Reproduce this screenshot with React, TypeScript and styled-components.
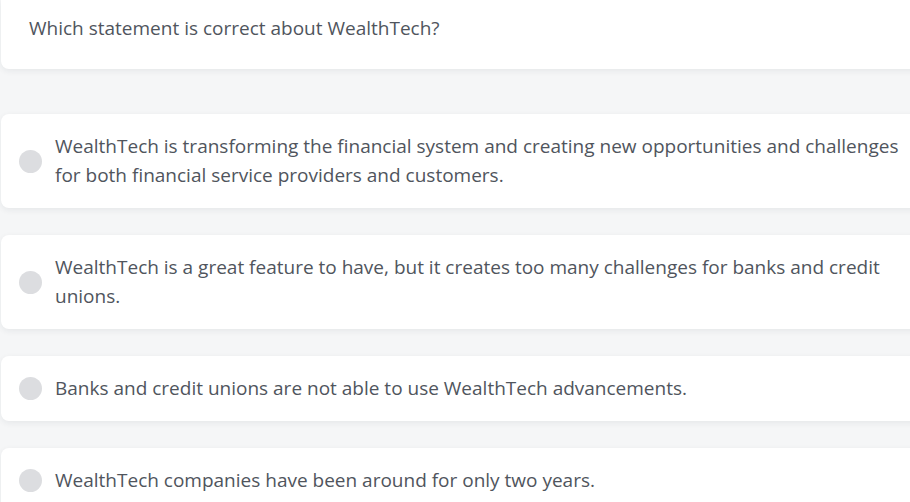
import styled, { createGlobalStyle } from 'styled-components'

const Global = createGlobalStyle`
  html, body {
    margin: 0;
    padding: 0;
    background: #f5f6f7;
    overflow: hidden;
  }
  body {
    font-family: "Open Sans", "Noto Sans", sans-serif;
    color: #50555d;
  }
`

let Page = styled.div`
  width: 940px;
  padding-left: 1px;
  display: flex;
  flex-direction: column;
`

let Card = styled.div`
  background: #fff;
  border-radius: 8px;
  box-shadow: 0 2px 6px rgba(30, 40, 60, 0.07);
`

let Question = styled(Card)`
  padding: 14px 28px 26px;
  margin-bottom: 45px;
  border-top-left-radius: 0;
  border-top-right-radius: 0;
  font-size: 19px;
  line-height: 29px;
`

let Options = styled.ul`
  list-style: none;
  margin: 0;
  padding: 0;
  display: flex;
  flex-direction: column;
  gap: 27px;
`

let Option = styled(Card).attrs({ as: 'li' })`
  display: flex;
  align-items: center;
  gap: 13px;
  padding: 18px 16px 18px 18px;
  cursor: pointer;
`

let Radio = styled.span`
  flex: none;
  width: 23px;
  height: 23px;
  border-radius: 50%;
  background: #dcdde0;
`

let Label = styled.span`
  font-size: 19px;
  line-height: 29px;
`

const answers = [
  'WealthTech is transforming the financial system and creating new opportunities and challenges for both financial service providers and customers.',
  'WealthTech is a great feature to have, but it creates too many challenges for banks and credit unions.',
  'Banks and credit unions are not able to use WealthTech advancements.',
  'WealthTech companies have been around for only two years.',
]

function App() {
  return (
    <Page>
      <Global />
      <Question>Which statement is correct about WealthTech?</Question>
      <Options>
        {answers.map((a) => (
          <Option key={a}>
            <Radio />
            <Label>{a}</Label>
          </Option>
        ))}
      </Options>
    </Page>
  )
}

export default App
